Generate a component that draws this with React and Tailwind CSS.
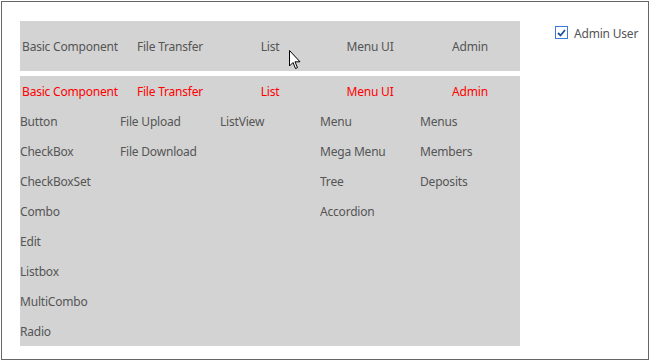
import React from "react";

const cols = [
  { title: "Basic Component", items: ["Button", "CheckBox", "CheckBoxSet", "Combo", "Edit", "Listbox", "MultiCombo", "Radio"] },
  { title: "File Transfer", items: ["File Upload", "File Download"] },
  { title: "List", items: ["ListView"] },
  { title: "Menu UI", items: ["Menu", "Mega Menu", "Tree", "Accordion"] },
  { title: "Admin", items: ["Menus", "Members", "Deposits"] },
];

export default function App() {
  return (
    <div className="p-px" style={{ fontFamily: '"Noto Sans", "Noto Sans CJK KR", sans-serif' }}>
      <div className="relative w-[648px] h-[359px] border border-[#666] flex pl-[18px] pt-[19px] text-[12px] tracking-[-0.2px] text-[#555]">
        <div className="w-[500px] flex flex-col">
          <div className="h-[50px] bg-[#d3d3d3] grid grid-cols-5 items-center pt-[2px]">
            {cols.map((c) => (
              <div key={c.title} className="text-center whitespace-nowrap">{c.title}</div>
            ))}
          </div>
          <div className="mt-[5px] bg-[#d3d3d3] grid grid-cols-5 items-start">
            {cols.map((c) => (
              <div key={c.title} className="flex flex-col">
                <div className="h-[30px] pt-[2px] flex items-center justify-center text-[#ff0000] whitespace-nowrap">{c.title}</div>
                {c.items.map((it) => (
                  <div key={it} className="h-[30px] pt-[2px] flex items-center whitespace-nowrap">{it}</div>
                ))}
              </div>
            ))}
          </div>
        </div>
        <label className="ml-[35px] mt-[5px] h-[13px] flex items-center gap-[6px] whitespace-nowrap">
          <span className="w-[13px] h-[13px] border border-[#3c7ad8] bg-white flex items-center justify-center">
            <svg width="9" height="8" viewBox="0 0 9 8">
              <path d="M1 4 L3.5 6.5 L8 1" fill="none" stroke="#1f4f9e" strokeWidth="1.8" />
            </svg>
          </span>
          <span className="pt-[2px]">Admin User</span>
        </label>
        <svg className="absolute left-[287px] top-[48px]" width="13" height="20" viewBox="0 0 13 20">
          <path d="M0.5 0.5 L0.5 16 L4 12.5 L6.5 18.5 L8.5 17.7 L6 11.8 L11 11.8 Z" fill="white" stroke="black" strokeWidth="1" strokeLinejoin="miter" />
        </svg>
      </div>
    </div>
  );
}
